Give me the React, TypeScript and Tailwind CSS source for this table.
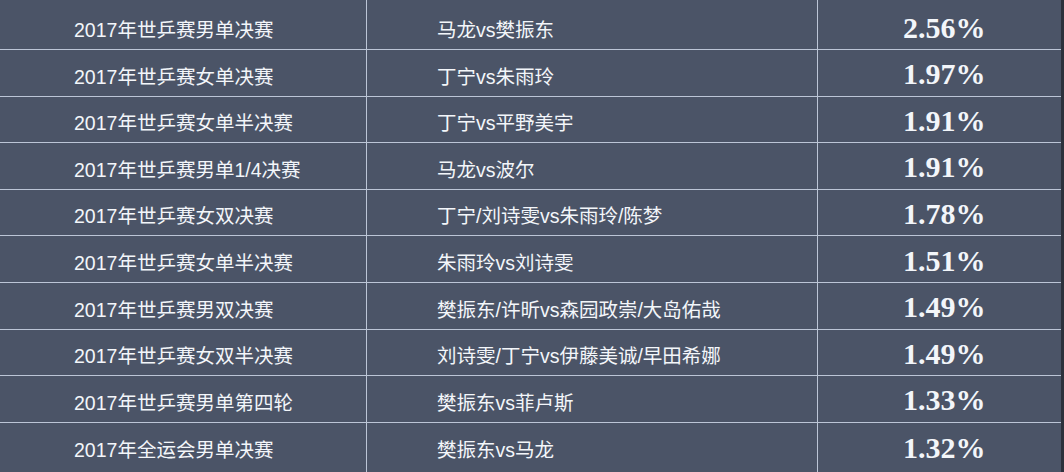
const ROWS = [
  { event: '2017年世乒赛男单决赛', match: '马龙vs樊振东', rate: '2.56%' },
  { event: '2017年世乒赛女单决赛', match: '丁宁vs朱雨玲', rate: '1.97%' },
  { event: '2017年世乒赛女单半决赛', match: '丁宁vs平野美宇', rate: '1.91%' },
  { event: '2017年世乒赛男单1/4决赛', match: '马龙vs波尔', rate: '1.91%' },
  { event: '2017年世乒赛女双决赛', match: '丁宁/刘诗雯vs朱雨玲/陈梦', rate: '1.78%' },
  { event: '2017年世乒赛女单半决赛', match: '朱雨玲vs刘诗雯', rate: '1.51%' },
  { event: '2017年世乒赛男双决赛', match: '樊振东/许昕vs森园政崇/大岛佑哉', rate: '1.49%' },
  { event: '2017年世乒赛女双半决赛', match: '刘诗雯/丁宁vs伊藤美诚/早田希娜', rate: '1.49%' },
  { event: '2017年世乒赛男单第四轮', match: '樊振东vs菲卢斯', rate: '1.33%' },
  { event: '2017年全运会男单决赛', match: '樊振东vs马龙', rate: '1.32%' },
]

export default function App() {
  return (
    <div className="w-[1064px] h-[472px] overflow-hidden bg-[#4b5467] flex text-[#f3f6fa]">
      <div className="flex-1 flex flex-col">
        {ROWS.map((row, i) => {
          const first = i === 0
          const last = i === ROWS.length - 1
          return (
            <div
              key={i}
              className={`flex ${first ? 'h-[50px] shrink-0' : last ? 'flex-1' : 'h-[46.6px] shrink-0'} ${last ? '' : 'border-b border-[#bcc5d6]'}`}
            >
              <div className={`w-[367px] shrink-0 border-r border-[#bcc5d6] flex items-center pl-[74px] ${first ? 'pt-[12px]' : last ? 'pt-[6px]' : 'pt-[9px]'} text-[19.5px] font-['Liberation_Sans','Noto_Sans_CJK_SC',sans-serif]`}>
                {row.event}
              </div>
              <div className={`w-[451px] shrink-0 border-r border-[#bcc5d6] flex items-center pl-[70px] ${first ? 'pt-[12px]' : last ? 'pt-[6px]' : 'pt-[9px]'} text-[19.5px] font-['Liberation_Sans','Noto_Sans_CJK_SC',sans-serif]`}>
                {row.match}
              </div>
              <div className={`flex-1 flex items-center pl-[85px] ${first ? 'pt-[5px]' : last ? 'pt-0' : 'pt-[2px]'} text-[30px] font-bold font-['Liberation_Serif',serif]`}>
                {row.rate}
              </div>
            </div>
          )
        })}
      </div>
      <div className="w-[3px] bg-[#2c313c]" />
    </div>
  )
}
